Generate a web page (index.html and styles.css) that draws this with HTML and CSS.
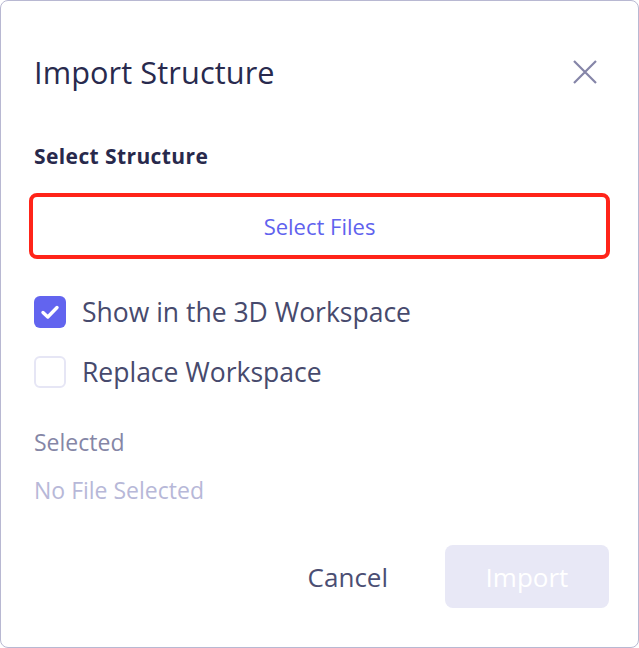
FILE: index.html
```html
<!DOCTYPE html>
<html lang="en">
<head>
<meta charset="utf-8">
<title>Import Structure</title>
<link rel="stylesheet" href="styles.css">
</head>
<body>
<div class="dialog">
  <div class="header">
    <h1 class="title">Import Structure</h1>
    <button class="close" aria-label="Close">
      <svg width="26" height="26" viewBox="0 0 26 26"><path d="M2 2L24 24M24 2L2 24" stroke="#8585a8" stroke-width="2.2" fill="none"/></svg>
    </button>
  </div>
  <div class="section-label">Select Structure</div>
  <button class="select-files">Select Files</button>
  <label class="check-row first">
    <span class="box checked">
      <svg width="32" height="32" viewBox="0 0 32 32"><path d="M9 16.5L13.8 21L23 11.5" stroke="#fff" stroke-width="3.4" fill="none" stroke-linecap="round" stroke-linejoin="round"/></svg>
    </span>
    <span class="check-text">Show in the 3D Workspace</span>
  </label>
  <label class="check-row second">
    <span class="box"></span>
    <span class="check-text">Replace Workspace</span>
  </label>
  <div class="selected-label">Selected</div>
  <div class="selected-value">No File Selected</div>
  <div class="footer">
    <button class="cancel">Cancel</button>
    <button class="import" disabled>Import</button>
  </div>
</div>
</body>
</html>
```
FILE: styles.css
```css
html, body {
  margin: 0;
  padding: 0;
  background: #ffffff;
}
body {
  font-family: "Open Sans", "Noto Sans", sans-serif;
}
.dialog {
  box-sizing: border-box;
  width: 639px;
  height: 648px;
  border: 1px solid #b8b8d2;
  border-radius: 8px;
  padding: 0 29px 0 32px;
  display: flex;
  flex-direction: column;
}
.header {
  display: flex;
  align-items: center;
  justify-content: space-between;
  height: 40px;
  margin-top: 51px;
  padding-left: 1px;
}
.title {
  margin: 0;
  font-size: 30.7px;
  line-height: 40px;
  font-weight: 400;
  color: #282a4e;
  letter-spacing: 0.1px;
}
.close {
  background: none;
  border: none;
  padding: 0;
  margin-right: 11px;
  display: flex;
}
.section-label {
  margin-top: 51px;
  padding-left: 1px;
  font-size: 21px;
  font-weight: 700;
  color: #28294c;
  line-height: 26px;
  letter-spacing: 0.4px;
}
.select-files {
  margin: 28px 0 0 0;
  height: 58px;
  width: 573px;
  box-sizing: border-box;
  border: none;
  outline: 4px solid #ff2419;
  border-radius: 4px;
  background: #fff;
  color: #6062ee;
  font-family: inherit;
  font-size: 22px;
  line-height: 30px;
}
.check-row {
  display: flex;
  align-items: center;
  gap: 16px;
  height: 34px;
  padding-left: 1px;
}
.check-row.first { margin-top: 40px; }
.check-row.second { margin-top: 26px; }
.box {
  width: 32px;
  height: 32px;
  box-sizing: border-box;
  border: 2px solid #e6e6f5;
  border-radius: 6px;
  display: flex;
  align-items: center;
  justify-content: center;
  flex: none;
}
.box.checked {
  background: #6264ef;
  border: none;
}
.check-text {
  font-size: 26.5px;
  line-height: 34px;
  color: #474a6d;
}
.selected-label {
  margin-top: 38px;
  padding-left: 1px;
  font-size: 23px;
  color: #8586a6;
  line-height: 30px;
}
.selected-value {
  margin-top: 18px;
  padding-left: 1px;
  font-size: 23px;
  color: #b7b8d8;
  line-height: 30px;
}
.footer {
  display: flex;
  justify-content: flex-end;
  align-items: center;
  gap: 57px;
  margin-top: 40px;
}
.cancel {
  background: none;
  border: none;
  padding: 0;
  font-family: inherit;
  font-size: 26px;
  line-height: 34px;
  color: #4b4e73;
}
.import {
  width: 164px;
  height: 63px;
  border: none;
  border-radius: 8px;
  background: #e8e8f6;
  color: #ffffff;
  font-family: inherit;
  font-size: 26px;
  line-height: 34px;
}
```
